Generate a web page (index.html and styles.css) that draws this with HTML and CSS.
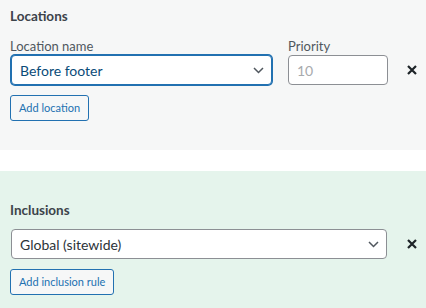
FILE: index.html
```html
<!DOCTYPE html>
<html lang="en">
<head>
    <meta charset="UTF-8">
    <meta name="viewport" content="width=device-width, initial-scale=1.0">
    <title>Locations</title>
    <link rel="stylesheet" href="styles.css">
</head>
<body>
    <div class="panel panel-locations">
        <h3 class="panel-title">Locations</h3>
        <div class="rule-row">
            <div class="field field-location">
                <label class="field-label">Location name</label>
                <div class="select is-focused">
                    <span>Before footer</span>
                    <svg class="chevron" width="11" height="7" viewBox="0 0 11 7"><path d="M1 1l4.5 4.5L10 1" fill="none" stroke="#50575e" stroke-width="1.5"/></svg>
                </div>
            </div>
            <div class="field field-priority">
                <label class="field-label">Priority</label>
                <input class="text-input" type="text" placeholder="10">
            </div>
            <button class="remove-btn" type="button" aria-label="Remove">
                <svg width="10" height="10" viewBox="0 0 10 10"><path d="M1 1l8 8M9 1l-8 8" stroke="#1d2327" stroke-width="2.2"/></svg>
            </button>
        </div>
        <button class="small-btn" type="button">Add location</button>
    </div>

    <div class="panel panel-inclusions">
        <h3 class="panel-title">Inclusions</h3>
        <div class="rule-row">
            <div class="select select-wide">
                <span>Global (sitewide)</span>
                <svg class="chevron" width="11" height="7" viewBox="0 0 11 7"><path d="M1 1l4.5 4.5L10 1" fill="none" stroke="#50575e" stroke-width="1.5"/></svg>
            </div>
            <button class="remove-btn" type="button" aria-label="Remove">
                <svg width="10" height="10" viewBox="0 0 10 10"><path d="M1 1l8 8M9 1l-8 8" stroke="#1d2327" stroke-width="2.2"/></svg>
            </button>
        </div>
        <button class="small-btn" type="button">Add inclusion rule</button>
    </div>
</body>
</html>
```

FILE: styles.css
```css
* {
    margin: 0;
    padding: 0;
    box-sizing: border-box;
}

body {
    font-family: Lato, "Noto Sans", sans-serif;
    color: #3c434a;
    background: white;
}

.panel {
    padding: 7px 10px 29px;
}

.panel-locations {
    background: #f6f7f7;
    margin-bottom: 21px;
}

.panel-inclusions {
    background: #e5f4ec;
    padding-top: 30px;
    padding-bottom: 13px;
}

.panel-title {
    font-size: 13.5px;
    line-height: 18px;
    font-weight: 700;
    color: #3c434a;
    margin-bottom: 12px;
}

.panel-inclusions .panel-title {
    margin-bottom: 10px;
}

.rule-row {
    display: flex;
    align-items: flex-end;
    margin-left: 1px;
}

.rule-row > * {
    flex: none;
}

.field {
    display: flex;
    flex-direction: column;
}

.field-location {
    width: 261px;
    margin-right: 16px;
}

.field-priority {
    width: 100px;
}

.field-label {
    font-size: 13px;
    line-height: 18px;
    color: #50575e;
}

.field-location .field-label {
    margin-left: -1px;
}

.select {
    height: 30px;
    display: flex;
    align-items: center;
    justify-content: space-between;
    padding: 0 7px 0 8px;
    background: white;
    border: 1px solid #8c8f94;
    border-radius: 4px;
    font-size: 14px;
    color: #2c3338;
}

.select.is-focused {
    border-color: #2271b1;
    box-shadow: 0 0 0 1px #2271b1;
    color: #0a4b78;
}

.select-wide {
    width: 376px;
    margin-right: 1px;
}

.text-input {
    height: 30px;
    padding: 0 8px;
    border: 1px solid #8c8f94;
    border-radius: 4px;
    font-family: inherit;
    font-size: 14px;
    color: #2c3338;
    background: white;
}

.text-input::placeholder {
    color: #a7aaad;
}

.remove-btn {
    width: 24px;
    height: 30px;
    margin-left: 12px;
    display: flex;
    align-items: center;
    justify-content: center;
    background: none;
    border: none;
}

.small-btn {
    display: block;
    margin-top: 10px;
    height: 26px;
    padding: 0 8px;
    font-family: inherit;
    font-size: 11px;
    line-height: 24px;
    color: #2271b1;
    background: #f6f7f7;
    border: 1px solid #2271b1;
    border-radius: 3px;
}
```
